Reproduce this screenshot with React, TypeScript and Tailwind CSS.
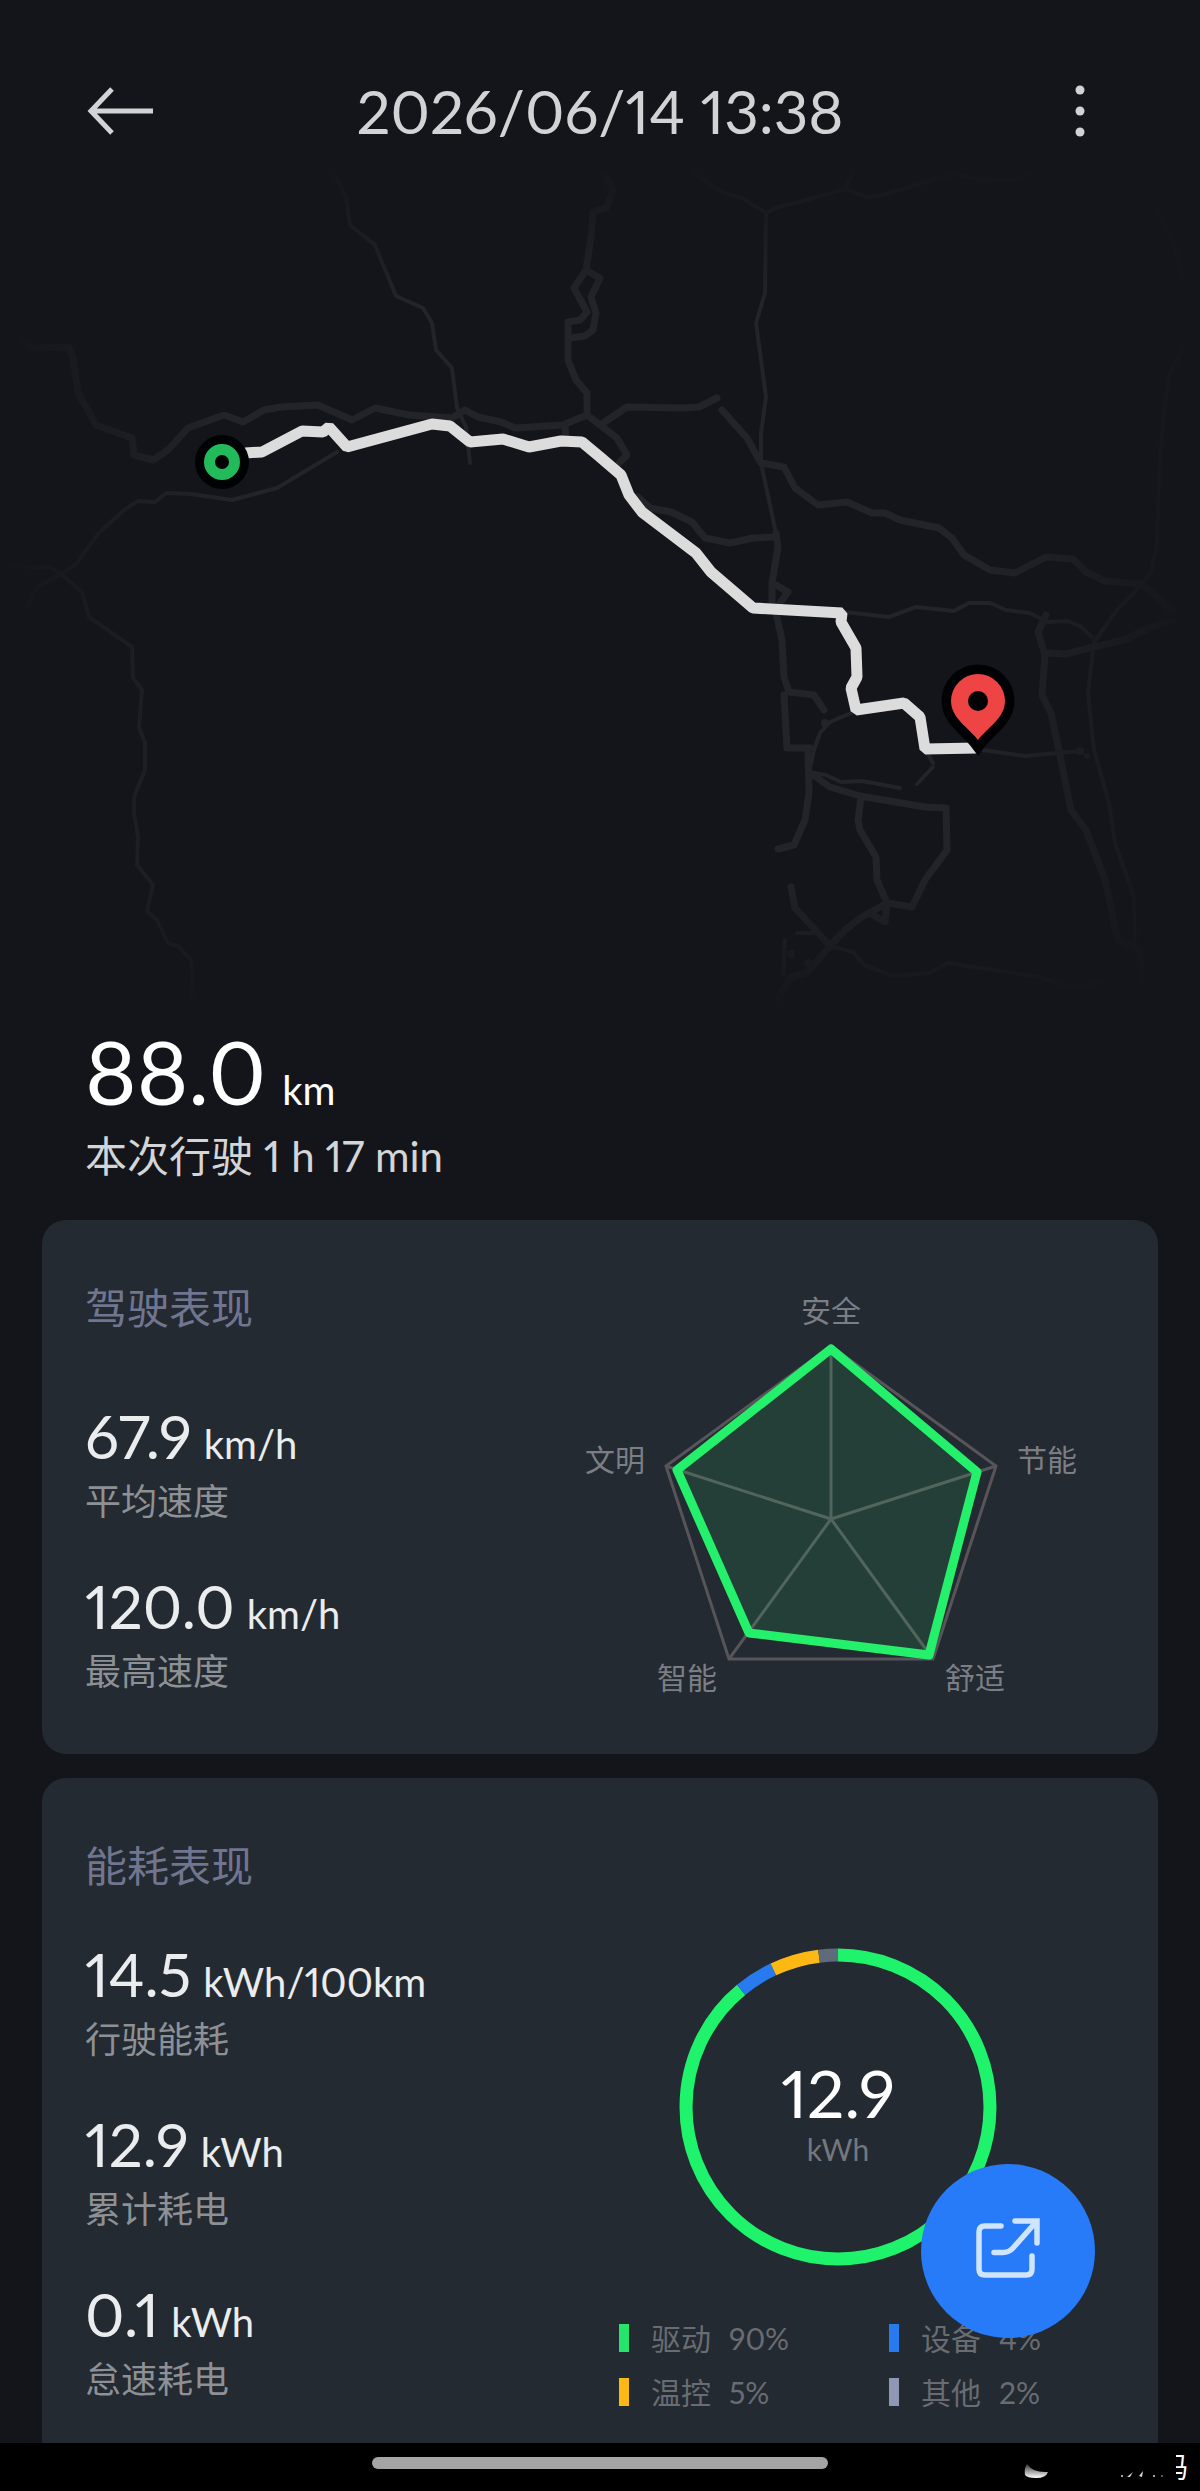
const MAJOR_ROADS = [
  '25,182 34,188 69,187 73,198 78,233 88,250 96,265 132,278 134,295 153,300 168,290 188,268 224,255 243,262 264,250 281,247 318,245 352,260 375,248 409,255 452,258 465,250 478,257 501,262 515,268 563,265 587,255 600,265 627,247 682,248 699,247 717,238',
  '600,265 617,278 627,295 619,303',
  '565,265 566,280',
  '604,13 613,30 606,48 593,52 591,77 586,110 574,128 587,152 580,160 568,162 568,200 576,220 587,233 587,255',
  '586,110 600,118 591,137 596,153 593,170 585,176 570,178',
  '722,250 747,278 761,303 784,307 795,328 818,345 847,342 872,353 885,353 900,360 939,368 952,378 964,395 990,410 1015,413 1046,397 1073,399 1086,412 1105,421 1142,424 1172,450',
  '638,337 650,348 671,352 692,362 705,378 730,383 753,378 774,377',
  '776,373 778,387 772,423 772,447 776,453 782,480 784,517 789,532 814,535 824,550',
  '776,425 788,432 780,443',
  '1046,455 1038,472 1045,495 1042,535 1051,553 1061,600 1071,650 1086,670 1105,720 1118,780 1139,790 1143,823',
  '1048,493 1065,494 1094,487 1124,480 1151,467 1174,460',
  '784,535 787,588 810,588',
  '808,593 809,633 805,660 794,685 778,689',
  '809,612 830,627 860,636 925,647 946,648 947,690 925,720 912,747 887,743 877,720 876,697 860,670 858,660 861,637',
  '791,727 795,748 830,786',
  '887,743 862,757 845,770 830,786 807,813 791,817 778,840',
  '887,743 885,762 873,755',
];

const MINOR_ROADS = [
  '335,15 346,37 350,65 375,85 396,136 423,148 432,163 436,190 452,208 457,248 466,267 470,303',
  '337,292 277,328 232,340 191,334 166,333 155,342 138,341 124,350 99,373 75,405 61,414 36,428 27,447',
  '11,407 50,407 61,414 82,432 89,457 132,487 133,518 142,530 139,567 145,583 145,610 134,637 134,653 138,677 137,705 153,725 147,751 157,760 168,783 178,786 191,800 193,820 191,840',
  '692,12 721,32 742,38 766,53 778,47 799,42 845,29 854,10',
  '845,29 868,37 883,35 952,14 983,20 1009,20 1029,15',
  '766,53 765,133 756,163 766,237 761,273 761,303 776,373',
  '1157,50 1174,82 1184,123',
  '1184,187 1170,213 1164,250 1159,317 1157,387 1151,412 1142,424 1117,450 1094,482 1088,533 1094,590 1109,643 1115,683 1134,737 1135,783',
  '845,452 889,457 916,447 954,451 969,443 990,443 1006,450 1030,453 1048,462 1067,461 1080,466 1092,477',
  '983,590 1025,596 1080,591',
  '851,553 830,562 820,573 814,590 809,612',
  '814,613 826,615 841,622 862,621 900,628',
  '925,589 933,603',
  '933,607 917,624',
  '830,786 853,792 864,805 893,816 929,813 948,803 1040,817 1067,827 1101,823',
  '797,773 813,773',
  '785,780 783,815',
];

const ROUTE =
  '245,293 262,292 302,271 323,272 329,267 347,287 432,264 450,266 470,282 503,279 529,287 561,281 582,282 600,297 621,315 629,335 642,352 696,393 711,412 753,448 842,453 841,462 856,488 857,517 851,528 856,550 904,543 920,557 925,589 977,588';

function RouteMap() {
  return (
    <svg viewBox="0 0 1200 850" className="block w-full" role="img" aria-label="行驶轨迹">
      <defs>
        <linearGradient id="fade-x" x1="0" x2="1" y1="0" y2="0">
          <stop offset="0" stopColor="#14151a" />
          <stop offset="0.19" stopColor="#14151a" stopOpacity="0" />
          <stop offset="0.81" stopColor="#14151a" stopOpacity="0" />
          <stop offset="1" stopColor="#14151a" />
        </linearGradient>
        <linearGradient id="fade-y" x1="0" x2="0" y1="0" y2="1">
          <stop offset="0" stopColor="#14151a" />
          <stop offset="0.17" stopColor="#14151a" stopOpacity="0" />
          <stop offset="0.83" stopColor="#14151a" stopOpacity="0" />
          <stop offset="1" stopColor="#14151a" />
        </linearGradient>
      </defs>
      <g fill="none" stroke="#22242a" strokeLinejoin="round" strokeLinecap="round">
        {MAJOR_ROADS.map((points) => (
          <polyline key={points} points={points} strokeWidth="7" />
        ))}
        {MINOR_ROADS.map((points) => (
          <polyline key={points} points={points} strokeWidth="4" />
        ))}
      </g>
      <circle cx="825" cy="563" r="4" fill="#22242a" />
      <circle cx="1080" cy="591" r="4" fill="#22242a" />
      <circle cx="1087" cy="596" r="3" fill="#22242a" />
      <circle cx="791" cy="794" r="4" fill="#22242a" />
      <circle cx="808" cy="803" r="4" fill="#22242a" />
      <rect width="1200" height="850" fill="url(#fade-x)" />
      <rect width="1200" height="850" fill="url(#fade-y)" />
      <polyline points={ROUTE} fill="none" stroke="#dcdcdc" strokeWidth="11" strokeLinejoin="bevel" />
      <circle cx="222" cy="302" r="27" fill="#010204" />
      <circle cx="222" cy="302" r="12.5" fill="none" stroke="#22ba5a" strokeWidth="11" />
      <path
        d="M978 580C969 568 951 558 951 541A27 27 0 0 1 1005 541C1005 558 987 568 978 580Z"
        fill="#ef4444"
        stroke="#010204"
        strokeWidth="19"
        strokeLinejoin="miter"
        paintOrder="stroke"
      />
      <circle cx="978" cy="541" r="10" fill="#010204" />
    </svg>
  );
}

function Metric({ value, unit, label }: { value: string; unit: string; label: string }) {
  return (
    <div className="flex flex-col">
      <dt className="order-last mt-1.5 text-[36px] leading-[54px] text-[#8d9095]">{label}</dt>
      <dd className="flex items-baseline gap-3 text-[#ebecee]">
        <span className="text-[60px] leading-[64px]">{value}</span>
        <span className="text-[40px] leading-none">{unit}</span>
      </dd>
    </div>
  );
}

function RadarChart() {
  return (
    <svg viewBox="0 0 510 420" className="h-[420px] w-[510px]" role="img" aria-label="驾驶表现雷达图">
      <g fill="none" stroke="#57555a" strokeWidth="3">
        <polygon points="255,66 420,186 357,379 153,379 90,186" />
        <path d="M255 239V66M255 239L420 186M255 239L357 379M255 239L153 379M255 239L90 186" />
      </g>
      <polygon
        points="255,69 401,192 353,375 173,353 101,190"
        fill="#25f06b"
        fillOpacity="0.11"
        stroke="#25f06b"
        strokeWidth="9"
        strokeLinejoin="round"
      />
      <g fill="#7c7e85" fontSize="30" textAnchor="middle">
        <text x="255" y="42">安全</text>
        <text x="471" y="191">节能</text>
        <text x="399" y="409">舒适</text>
        <text x="111" y="409">智能</text>
        <text x="39" y="191">文明</text>
      </g>
    </svg>
  );
}

const SEGMENTS = [
  { color: '#1ff26b', from: 0, to: 89 },
  { color: '#277bee', from: 89, to: 93 },
  { color: '#fdb913', from: 93, to: 98 },
  { color: '#5f6a7b', from: 98, to: 100 },
];

function EnergyRing() {
  return (
    <div className="relative size-[318px]">
      <svg viewBox="0 0 318 318" className="size-full -rotate-90" aria-hidden="true">
        {SEGMENTS.map((s) => (
          <circle
            key={s.color}
            cx="159"
            cy="159"
            r="152"
            fill="none"
            stroke={s.color}
            strokeWidth="13"
            pathLength="100"
            strokeDasharray={`${s.to - s.from} 100`}
            strokeDashoffset={-s.from}
          />
        ))}
      </svg>
      <div className="absolute inset-0 flex flex-col items-center justify-center pt-3">
        <span className="text-[66px] leading-[72px] text-white">12.9</span>
        <span className="text-[30px] leading-10 text-[#75777e]">kWh</span>
      </div>
    </div>
  );
}

function LegendItem({ swatch, name, share }: { swatch: string; name: string; share: string }) {
  return (
    <li className="flex items-center text-[30px] leading-[54px] text-[#696c72]">
      <span className={`mr-[22px] h-7 w-[10px] ${swatch}`} />
      <span className="mr-[18px]">{name}</span>
      <span>{share}</span>
    </li>
  );
}

export default function App() {
  return (
    <div className="relative flex min-h-screen flex-col bg-[#14151a] font-[Lato,'Noto_Sans_CJK_SC',sans-serif] proportional-nums">
      <header className="grid h-40 grid-cols-[1fr_auto_1fr] items-center px-[84px] pt-[62px] text-[#d2d3d5]">
        <button type="button" aria-label="返回" className="justify-self-start">
          <svg viewBox="0 0 72 52" className="h-[52px] w-[72px]" fill="none" stroke="currentColor" strokeWidth="5">
            <path d="M69 26H8M28 4L7 26L28 48" />
          </svg>
        </button>
        <h1 className="text-[60px] leading-[72px]">2026/06/14 13:38</h1>
        <button type="button" aria-label="更多" className="justify-self-end">
          <svg viewBox="0 0 72 52" className="h-[52px] w-[72px]" fill="currentColor">
            <circle cx="36" cy="5" r="4.5" />
            <circle cx="36" cy="26" r="4.5" />
            <circle cx="36" cy="47" r="4.5" />
          </svg>
        </button>
      </header>

      <RouteMap />

      <main className="flex flex-1 flex-col px-[42px]">
        <section className="px-[43px] pt-4">
          <p className="flex items-baseline gap-4 text-white">
            <span className="text-[88px] leading-[90px]">88.0</span>
            <span className="text-[40px] leading-none">km</span>
          </p>
          <p className="pt-2 text-[42px] leading-[64px] text-[#d4d5d7]">本次行驶 1 h 17 min</p>
        </section>

        <section className="mt-8 flex justify-between rounded-3xl bg-[#232a31] pt-14 pr-[72px] pb-[54px] pl-[43px]">
          <div>
            <h2 className="text-[42px] leading-[64px] text-[#72758f]">驾驶表现</h2>
            <dl className="flex flex-col gap-[46px] pt-16">
              <Metric value="67.9" unit="km/h" label="平均速度" />
              <Metric value="120.0" unit="km/h" label="最高速度" />
            </dl>
          </div>
          <div className="pt-1">
            <RadarChart />
          </div>
        </section>

        <section className="mt-6 flex flex-1 justify-between rounded-t-3xl bg-[#232a31] pt-14 pr-[76px] pl-[43px]">
          <div>
            <h2 className="text-[42px] leading-[64px] text-[#72758f]">能耗表现</h2>
            <dl className="flex flex-col gap-[46px] pt-11">
              <Metric value="14.5" unit="kWh/100km" label="行驶能耗" />
              <Metric value="12.9" unit="kWh" label="累计耗电" />
              <Metric value="0.1" unit="kWh" label="怠速耗电" />
            </dl>
          </div>
          <div className="flex w-[463px] flex-col pt-[114px]">
            <div className="ml-[60px]">
              <EnergyRing />
            </div>
            <ul className="mt-[45px] grid grid-cols-[270px_1fr]">
              <LegendItem swatch="bg-[#25e56c]" name="驱动" share="90%" />
              <LegendItem swatch="bg-[#277bee]" name="设备" share="4%" />
              <LegendItem swatch="bg-[#fdb913]" name="温控" share="5%" />
              <LegendItem swatch="bg-[#8e98b4]" name="其他" share="2%" />
            </ul>
          </div>
        </section>
      </main>

      <button
        type="button"
        aria-label="分享"
        className="absolute right-[105px] bottom-[153px] flex size-[174px] items-center justify-center rounded-full bg-[#277bf8] text-[#cfe5ff]"
      >
        <svg viewBox="0 0 96 96" className="size-24" fill="none" stroke="currentColor" strokeWidth="5.5" strokeLinecap="round">
          <path d="M41 23H25Q19 23 19 29V66Q19 72 25 72H66Q72 72 72 66V53" />
          <path d="M34 49.500H43Q49 49.500 53 45L76 19M55 18H77V40" />
        </svg>
      </button>

      <footer className="relative flex h-12 items-start justify-center bg-black pt-[14px]">
        <span className="h-3 w-[456px] rounded-full bg-[#a5a5a5]" />
        <div className="absolute right-3 bottom-2 flex h-8 items-end">
          <svg viewBox="0 0 152 32" className="h-8 w-[152px]" aria-hidden="true">
            <defs>
              <linearGradient id="moon" x1="0" x2="0" y1="0" y2="1">
                <stop offset="0" stopColor="#fff" stopOpacity="0.2" />
                <stop offset="1" stopColor="#fff" />
              </linearGradient>
            </defs>
            <path d="M3 13Q9 22 24 21Q22 27 12 27Q3 27 1 24Q0 17 3 13Z" fill="url(#moon)" />
            <g fill="#d8d8d8">
              <circle cx="98" cy="25" r="1" />
              <path d="M103 26L109 21L106 26Z" />
              <path d="M115 25L119 20L118 26Z" />
              <circle cx="130" cy="25" r="1" />
              <circle cx="138" cy="25" r="1" opacity="0.5" />
            </g>
          </svg>
          <span className="flex w-3 justify-end overflow-hidden text-[28px] leading-8 text-white">码</span>
        </div>
      </footer>
    </div>
  );
}
